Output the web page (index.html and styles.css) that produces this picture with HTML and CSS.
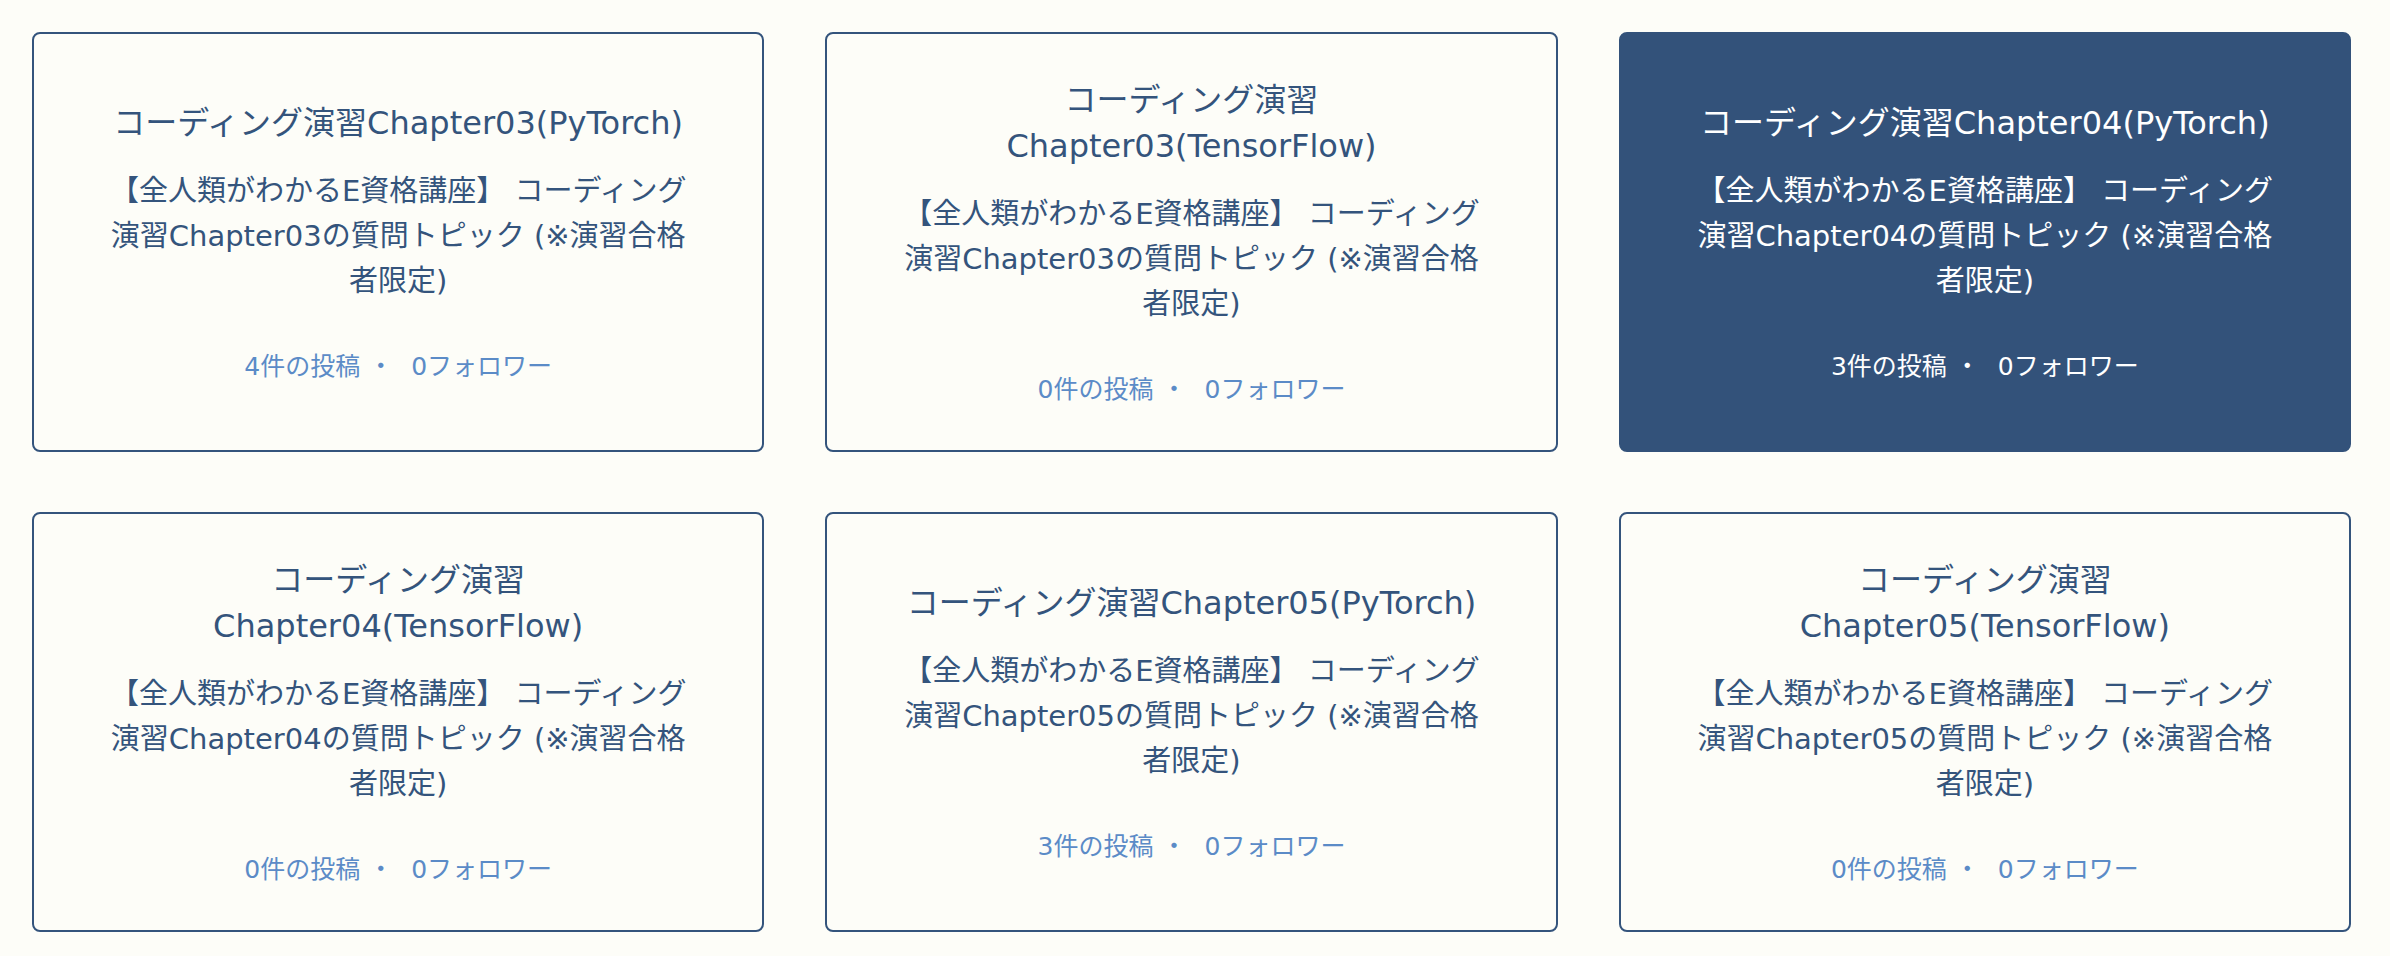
FILE: index.html
```html
<!DOCTYPE html>
<html lang="ja">
<head>
<meta charset="utf-8">
<title>トピック一覧</title>
<link rel="stylesheet" href="styles.css">
</head>
<body>
<main class="grid">
  <a class="card">
    <h2 class="title">コーディング演習Chapter03(PyTorch)</h2>
    <p class="desc">【全人類がわかるE資格講座】 コーディング演習Chapter03の質問トピック (※演習合格者限定)</p>
    <p class="stats"><span>4件の投稿</span><span class="sep">・</span><span>0フォロワー</span></p>
  </a>
  <a class="card">
    <h2 class="title">コーディング演習Chapter03(TensorFlow)</h2>
    <p class="desc">【全人類がわかるE資格講座】 コーディング演習Chapter03の質問トピック (※演習合格者限定)</p>
    <p class="stats"><span>0件の投稿</span><span class="sep">・</span><span>0フォロワー</span></p>
  </a>
  <a class="card active">
    <h2 class="title">コーディング演習Chapter04(PyTorch)</h2>
    <p class="desc">【全人類がわかるE資格講座】 コーディング演習Chapter04の質問トピック (※演習合格者限定)</p>
    <p class="stats"><span>3件の投稿</span><span class="sep">・</span><span>0フォロワー</span></p>
  </a>
  <a class="card">
    <h2 class="title">コーディング演習Chapter04(TensorFlow)</h2>
    <p class="desc">【全人類がわかるE資格講座】 コーディング演習Chapter04の質問トピック (※演習合格者限定)</p>
    <p class="stats"><span>0件の投稿</span><span class="sep">・</span><span>0フォロワー</span></p>
  </a>
  <a class="card">
    <h2 class="title">コーディング演習Chapter05(PyTorch)</h2>
    <p class="desc">【全人類がわかるE資格講座】 コーディング演習Chapter05の質問トピック (※演習合格者限定)</p>
    <p class="stats"><span>3件の投稿</span><span class="sep">・</span><span>0フォロワー</span></p>
  </a>
  <a class="card">
    <h2 class="title">コーディング演習Chapter05(TensorFlow)</h2>
    <p class="desc">【全人類がわかるE資格講座】 コーディング演習Chapter05の質問トピック (※演習合格者限定)</p>
    <p class="stats"><span>0件の投稿</span><span class="sep">・</span><span>0フォロワー</span></p>
  </a>
</main>
</body>
</html>
```

FILE: styles.css
```css
html, body {
  margin: 0;
  padding: 0;
  background: #fdfdf8;
}

body {
  font-family: "DejaVu Sans", "Noto Sans CJK JP", sans-serif;
  color: #34547c;
}

.grid {
  display: grid;
  grid-template-columns: repeat(3, 1fr);
  grid-auto-rows: 420px;
  column-gap: 61px;
  row-gap: 60px;
  padding: 32px 39px 0 32px;
}

.card {
  display: flex;
  flex-direction: column;
  justify-content: center;
  align-items: center;
  text-align: center;
  box-sizing: border-box;
  border: 2px solid #34547c;
  border-radius: 8px;
  padding: 0 64px;
  color: #34547c;
  text-decoration: none;
  cursor: pointer;
}

.card.active {
  background: #33527a;
  border-color: #33527a;
  color: #ffffff;
}

.title {
  margin: 0;
  font-size: 32px;
  font-weight: 400;
  line-height: 46px;
}

.desc {
  margin: 23px 0 0;
  font-size: 29px;
  line-height: 45px;
}

.stats {
  margin: 45px 0 0;
  font-size: 25px;
  line-height: 36px;
  color: #5b8bc7;
}

.card.active .stats {
  color: #ffffff;
}

.sep {
  padding: 0 18px 0 8px;
}
```
